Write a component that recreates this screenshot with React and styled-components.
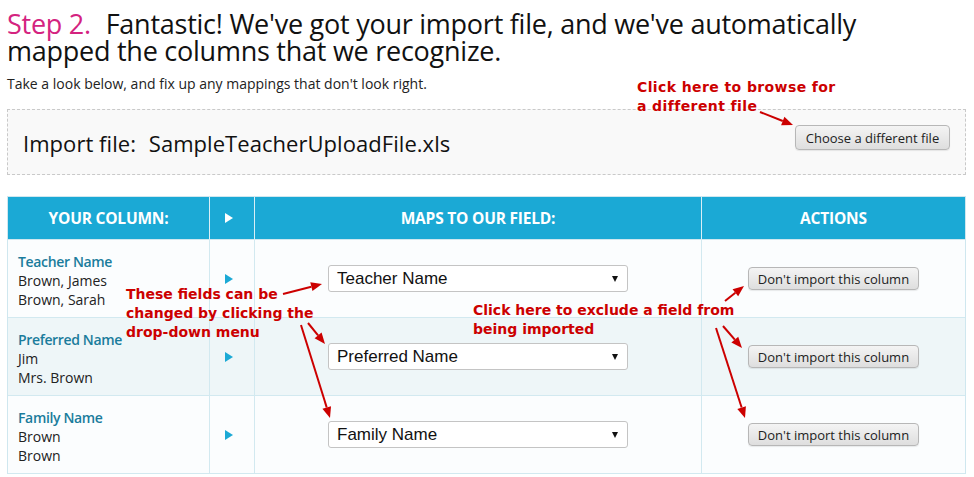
import React from 'react';
import styled, { createGlobalStyle } from 'styled-components';

const GlobalStyle = createGlobalStyle`
  html, body {
    margin: 0;
    padding: 0;
    background: #ffffff;
  }
  body {
    font-family: 'Open Sans', Lato, sans-serif;
    color: #111;
  }
`;

const Page = styled.div`
  position: relative;
  width: 974px;
  height: 477px;
  overflow: hidden;
  padding: 0 8px 0 7px;
  box-sizing: border-box;
`;

const Title = styled.h1`
  margin: 0;
  padding-top: 10px;
  font-size: 27px;
  line-height: 27px;
  font-weight: 400;
  letter-spacing: -0.25px;
  color: #111;
  white-space: nowrap;
`;

const Step = styled.span`
  color: #d4237f;
  margin-right: 8px;
`;

const Subtitle = styled.p`
  margin: 11px 0 0;
  font-size: 14px;
  line-height: 17px;
  color: #222;
`;

const FileBox = styled.div`
  margin-top: 17px;
  height: 66px;
  box-sizing: border-box;
  border: 1px dashed #c9c9c9;
  background: #f9f9f9;
  display: flex;
  align-items: center;
  justify-content: space-between;
  padding: 0 15px 0 15px;
`;

const FileLabel = styled.div`
  font-size: 22px;
  color: #111;
  padding-top: 2px;
  letter-spacing: 0.05px;

  span {
    margin-left: 7px;
  }
`;

const GreyButton = styled.button`
  font-family: 'Open Sans', sans-serif;
  font-size: 13px;
  color: #222;
  height: ${p => p.$h}px;
  width: ${p => p.$w}px;
  padding: 0;
  border: 1px solid #b7b7b7;
  border-radius: 4px;
  background: linear-gradient(#f4f4f4, #dedede);
  box-shadow: 0 1px 1px rgba(0, 0, 0, 0.08);
`;

const ChooseButton = styled(GreyButton)`
  margin-top: -9px;
`;

const Table = styled.div`
  margin-top: 21px;
  display: grid;
  grid-template-columns: 201px 45px 447px 1fr;
  border: 1px solid #cfe7ef;
  border-bottom: none;
`;

const HeadCell = styled.div`
  height: 42px;
  background: #1ba9d5;
  color: #fff;
  font-weight: 700;
  font-size: 15.5px;
  letter-spacing: -0.2px;
  display: flex;
  align-items: center;
  justify-content: center;
  border-left: ${p => (p.$first ? 'none' : '1px solid #d9eff6')};
  border-bottom: 1px solid #cfe7ef;
`;

const Cell = styled.div`
  height: 78px;
  box-sizing: border-box;
  background: ${p => (p.$alt ? '#eef6f8' : '#fbfdfe')};
  border-left: ${p => (p.$first ? 'none' : '1px solid #d2e9f0')};
  border-bottom: 1px solid #d2e9f0;
  display: flex;
  align-items: center;
  justify-content: center;
`;

const NameCell = styled(Cell)`
  flex-direction: column;
  align-items: flex-start;
  justify-content: flex-start;
  padding: 12px 0 0 10px;
  font-size: 14px;
  line-height: 19px;
  color: #222;
`;

const FieldName = styled.div`
  color: #1a7c9c;
  font-weight: 600;
  letter-spacing: -0.35px;
`;

const Tri = styled.span`
  display: inline-block;
  width: 0;
  height: 0;
  border-top: 5px solid transparent;
  border-bottom: 5px solid transparent;
  border-left: 8px solid ${p => p.$color};
  margin-right: 7px;
`;

const Select = styled.div`
  width: 300px;
  height: 27px;
  box-sizing: border-box;
  border: 1px solid #c4c4c4;
  border-radius: 3px;
  background: #fff;
  display: flex;
  align-items: center;
  justify-content: space-between;
  padding: 0 9px 0 8px;
  font-family: 'Liberation Sans', Arial, sans-serif;
  font-size: 17px;
  color: #111;

  &::after {
    content: '';
    border-left: 3px solid transparent;
    border-right: 3px solid transparent;
    border-top: 6px solid #111;
  }
`;

const Note = styled.div`
  position: absolute;
  left: ${p => p.$x}px;
  top: ${p => p.$y}px;
  font-family: 'DejaVu Sans', Verdana, sans-serif;
  font-weight: 700;
  font-size: 14px;
  line-height: 19px;
  color: #cc0000;
  white-space: nowrap;
  letter-spacing: ${p => p.$ls || 0}px;
`;

const Arrows = styled.svg`
  position: absolute;
  left: 0;
  top: 0;
  pointer-events: none;
`;

const rows = [
  { name: 'Teacher Name', values: ['Brown, James', 'Brown, Sarah'] },
  { name: 'Preferred Name', values: ['Jim', 'Mrs. Brown'] },
  { name: 'Family Name', values: ['Brown', 'Brown'] },
];

const arrows = [
  [760, 112, 793, 125],
  [283, 294, 322, 284],
  [308, 323, 325, 344],
  [301, 325, 330, 418],
  [725, 301, 744, 286],
  [723, 326, 742, 348],
  [716, 328, 745, 418],
];

function Arrow({ a }) {
  const [x1, y1, x2, y2] = a;
  const dx = x2 - x1;
  const dy = y2 - y1;
  const len = Math.hypot(dx, dy);
  const ux = dx / len;
  const uy = dy / len;
  const hl = 11;
  const hw = 4.5;
  const bx = x2 - ux * hl;
  const by = y2 - uy * hl;
  const pts = `${x2},${y2} ${bx - uy * hw},${by + ux * hw} ${bx + uy * hw},${by - ux * hw}`;
  return (
    <g>
      <line x1={x1} y1={y1} x2={bx} y2={by} stroke="#cc0000" strokeWidth="2" />
      <polygon points={pts} fill="#cc0000" />
    </g>
  );
}

export default function App() {
  return (
    <Page>
      <GlobalStyle />
      <Title>
        <Step>Step 2.</Step> Fantastic! We've got your import file, and we've automatically
        <br />
        mapped the columns that we recognize.
      </Title>
      <Subtitle>Take a look below, and fix up any mappings that don't look right.</Subtitle>
      <FileBox>
        <FileLabel>
          Import file: <span>SampleTeacherUploadFile.xls</span>
        </FileLabel>
        <ChooseButton $w={155} $h={25}>Choose a different file</ChooseButton>
      </FileBox>
      <Table>
        <HeadCell $first>YOUR COLUMN:</HeadCell>
        <HeadCell>
          <Tri $color="#ffffff" />
        </HeadCell>
        <HeadCell>MAPS TO OUR FIELD:</HeadCell>
        <HeadCell>ACTIONS</HeadCell>
        {rows.map((r, i) => (
          <React.Fragment key={r.name}>
            <NameCell $first $alt={i === 1}>
              <FieldName>{r.name}</FieldName>
              {r.values.map((v, j) => (
                <div key={j}>{v}</div>
              ))}
            </NameCell>
            <Cell $alt={i === 1}>
              <Tri $color="#1ba9d5" />
            </Cell>
            <Cell $alt={i === 1}>
              <Select>{r.name}</Select>
            </Cell>
            <Cell $alt={i === 1}>
              <GreyButton $w={171} $h={23}>Don't import this column</GreyButton>
            </Cell>
          </React.Fragment>
        ))}
      </Table>

      <Note $x={637} $y={78} $ls={0.4}>
        Click here to browse for
        <br />
        a different file
      </Note>
      <Note $x={126} $y={285}>
        These fields can be
        <br />
        changed by clicking the
        <br />
        drop-down menu
      </Note>
      <Note $x={473} $y={301}>
        Click here to exclude a field from
        <br />
        being imported
      </Note>
      <Arrows width="974" height="477">
        {arrows.map((a, i) => (
          <Arrow key={i} a={a} />
        ))}
      </Arrows>
    </Page>
  );
}
